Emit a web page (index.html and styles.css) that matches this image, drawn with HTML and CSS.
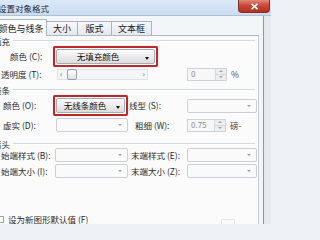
FILE: index.html
```html
<!DOCTYPE html>
<html lang="zh">
<head>
<meta charset="utf-8">
<title>设置对象格式</title>
<link rel="stylesheet" href="styles.css">
</head>
<body>
<div class="win">
  <div class="titlebar">
    <span class="title">设置对象格式</span>
    <div class="close">
      <svg width="9" height="7" viewBox="0 0 9 7"><path d="M1.5 0.8 L7.5 6.2 M7.5 0.8 L1.5 6.2" stroke="#fff" stroke-width="1.6" fill="none"/></svg>
    </div>
  </div>
  <div class="client">
    <div class="main">
      <div class="tabs">
        <div class="tab tab-active">颜色与线条</div>
        <div class="tab tab-size">大小</div>
        <div class="tab tab-layout">版式</div>
        <div class="tab tab-text">文本框</div>
      </div>
      <div class="panel">
        <div class="ghead"><span>填充</span><i></i></div>
        <div class="row row-big">
          <span class="lbl lbl-fill">颜色 (C):</span>
          <div class="hl hl-fill"><div class="combo-on"><span class="ctext">无填充颜色</span><span class="carrow"></span></div></div>
        </div>
        <div class="row row-trans">
          <span class="lbl lbl-trans">透明度 (T):</span>
          <div class="slider"><span class="sarr">‹</span><span class="thumb"></span><span class="sfill"></span><span class="sarr">›</span></div>
          <div class="spin spin-trans"><span class="sval">0</span><span class="sbtn"><i class="up"></i><i class="dn"></i></span></div>
          <span class="unit">%</span>
        </div>
        <div class="ghead ghead-line"><span>线条</span><i></i></div>
        <div class="row row-big">
          <span class="lbl lbl-line">颜色 (O):</span>
          <div class="hl hl-line"><div class="combo-on"><span class="ctext">无线条颜色</span><span class="carrow"></span></div></div>
          <span class="rlbl rlbl-type">线型 (S):</span>
          <div class="combo combo-r"><span class="darrow"></span></div>
        </div>
        <div class="row row-dash">
          <span class="lbl lbl-dash">虚实 (D):</span>
          <div class="combo combo-dash"><span class="darrow"></span></div>
          <span class="rlbl rlbl-weight">粗细 (W):</span>
          <div class="spin spin-weight"><span class="sval">0.75</span><span class="sbtn"><i class="up"></i><i class="dn"></i></span></div>
          <span class="unit">磅-</span>
        </div>
        <div class="ghead ghead-arrow"><span>箭头</span><i></i></div>
        <div class="row row-begin">
          <span class="lbl lbl-arrow">始端样式 (B):</span>
          <div class="combo combo-arrow"><span class="darrow"></span></div>
          <span class="rlbl rlbl-end">末端样式 (E):</span>
          <div class="combo combo-r"><span class="darrow"></span></div>
        </div>
        <div class="row row-size">
          <span class="lbl lbl-arrow">始端大小 (I):</span>
          <div class="combo combo-arrow"><span class="darrow"></span></div>
          <span class="rlbl rlbl-end">末端大小 (Z):</span>
          <div class="combo combo-r"><span class="darrow"></span></div>
        </div>
        <div class="row row-check">
          <span class="check"></span>
          <span class="check-text">设为新图形默认值 (F)</span>
          <span class="btn-ghost"></span>
        </div>
      </div>
    </div>
    <div class="edge"></div>
  </div>
</div>
</body>
</html>
```

FILE: styles.css
```css
* { box-sizing: border-box; margin: 0; padding: 0; }
html, body { width: 271px; height: 224px; overflow: hidden; }
body {
  font-family: "Noto Sans CJK SC", "Noto Sans", sans-serif;
  font-size: 8.5px;
  line-height: 1;
  color: #2b2b2b;
  background: #eef1f5;
}
.win { display: flex; flex-direction: column; height: 224px; }

.titlebar {
  height: 18px;
  display: flex;
  align-items: flex-start;
  background: linear-gradient(#dbe8f6, #cbddf1);
  border-bottom: 1px solid #b3c1cf;
}
.title { margin-left: -2px; margin-top: 4px; font-size: 8.5px; color: #1d2a38; }
.close {
  margin-left: auto;
  margin-right: 1px;
  width: 32px;
  height: 13px;
  background: linear-gradient(#e08b78, #c9493a 45%, #b1301f);
  border: 1px solid #8c2b1e;
  border-top: none;
  border-radius: 0 0 4px 4px;
  display: flex;
  align-items: center;
  justify-content: center;
}

.client { flex: 1; display: flex; background: #f3f6f9; }
.main { width: 259px; display: flex; flex-direction: column; }

.tabs { height: 19px; display: flex; align-items: flex-end; }
.tab {
  height: 14px;
  display: flex;
  align-items: center;
  justify-content: center;
  font-size: 9px;
  color: #222;
  border: 1px solid #a9b4c0;
  border-bottom: none;
  background: linear-gradient(#f7f8fa, #e4e8ed);
  margin-left: -1px;
}
.tab-active {
  height: 17px;
  width: 50px;
  margin-left: -3px;
  margin-bottom: -1px;
  background: #fbfbfc;
  position: relative;
  z-index: 1;
  padding-right: 2px;
}
.tab-size { width: 32px; }
.tab-layout { width: 35px; }
.tab-text { width: 41px; }

.panel {
  flex: 1;
  display: flex;
  flex-direction: column;
  background: #fbfbfc;
  border-top: 1px solid #aeb8c3;
  border-right: 1px solid #c6ced6;
}

.ghead { height: 10px; display: flex; align-items: center; margin-left: -7px; margin-right: 3px; }
.ghead span { margin-right: 3px; }
.ghead i { flex: 1; height: 2px; border-top: 1px solid #d2d9e0; border-bottom: 1px solid #ffffff; }
.ghead-line { margin-top: 4px; }
.ghead-arrow { margin-top: 7px; }

.row { display: flex; align-items: center; }
.row-big { height: 21px; }
.row-trans { height: 14px; }
.row-dash { height: 14px; margin-top: 2px; }
.row-begin { height: 14px; margin-top: -1px; }
.row-size { height: 14px; margin-top: 2px; }
.row-check { height: 10px; margin-top: 36px; margin-left: -3px; }

.lbl { flex: none; white-space: nowrap; }
.lbl-fill { width: 53px; padding-left: 10px; }
.lbl-trans { width: 57px; padding-left: 1px; }
.lbl-line { width: 53px; padding-left: 3px; }
.lbl-dash { width: 56px; padding-left: 3px; }
.lbl-arrow { width: 55px; padding-left: 1px; }

.rlbl { flex: none; width: 59px; white-space: nowrap; }
.rlbl-type { padding-left: 1px; }
.rlbl-weight { padding-left: 7px; }
.rlbl-end { padding-left: 3px; }

.hl {
  flex: none;
  height: 21px;
  border: 2px solid #b82a2e;
  border-radius: 2px;
  padding: 1px;
  background: #fff;
  box-shadow: 0 0 1px #d88;
}
.hl-fill { width: 105px; }
.hl-line { width: 75px; }
.combo-on {
  height: 100%;
  display: flex;
  align-items: center;
  border: 1px solid #a9adb2;
  border-radius: 2px;
  background: linear-gradient(#fbfbfb, #ececec 50%, #dcdcdc);
}
.ctext { flex: 1; text-align: center; color: #111; }
.carrow {
  width: 15px;
  height: 0;
  display: flex;
  justify-content: center;
}
.carrow::before {
  content: "";
  border-left: 2.5px solid transparent;
  border-right: 2.5px solid transparent;
  border-top: 3px solid #111;
}
.hl-line .ctext { padding-left: 2px; }
.hl-line .carrow { width: 13px; }

.combo {
  flex: none;
  height: 14px;
  border: 1px solid #ccd0d4;
  border-radius: 2px;
  background: #fafafa;
  display: flex;
  align-items: center;
  justify-content: flex-end;
  padding-right: 5px;
}
.darrow {
  border-left: 2px solid transparent;
  border-right: 2px solid transparent;
  border-top: 2.5px solid #9a9ea3;
}
.combo-r { width: 70px; }
.combo-dash { width: 72px; }
.combo-arrow { width: 73px; }

.slider {
  flex: none;
  width: 91px;
  height: 11px;
  display: flex;
  align-items: center;
  border: 1px solid #e0e3e6;
  background: #f4f5f6;
  color: #666;
  font-size: 8px;
  padding: 0 2px;
}
.sarr { line-height: 1; }
.thumb {
  width: 10px;
  height: 11px;
  margin-left: 5px;
  border: 1px solid #9aa1a8;
  border-radius: 2px;
  background: linear-gradient(#ffffff, #dfe2e5);
}
.sfill { flex: 1; }

.spin {
  flex: none;
  height: 13px;
  display: flex;
  border: 1px solid #cfd3d7;
  background: #f7f7f7;
  color: #8b8b8b;
}
.spin-trans { width: 40px; margin-left: 39px; }
.spin-weight { width: 39px; }
.sval { flex: 1; display: flex; align-items: center; padding-left: 3px; font-size: 8px; }
.sbtn {
  width: 11px;
  display: flex;
  flex-direction: column;
  border-left: 1px solid #d6d9dc;
  background: #eceef0;
}
.sbtn i { flex: 1; display: flex; align-items: center; justify-content: center; }
.sbtn i + i { border-top: 1px solid #d6d9dc; }
.up::before {
  content: "";
  border-left: 2px solid transparent;
  border-right: 2px solid transparent;
  border-bottom: 2px solid #a0a4a8;
}
.dn::before {
  content: "";
  border-left: 2px solid transparent;
  border-right: 2px solid transparent;
  border-top: 2px solid #a0a4a8;
}
.unit { margin-left: 4px; color: #444; }

.check {
  flex: none;
  width: 7px;
  height: 7px;
  border: 1px solid #9da3a9;
  background: #fff;
}
.check-text { margin-left: 4px; }
.btn-ghost {
  margin-left: 133px;
  width: 14px;
  height: 6px;
  margin-top: 6px;
  border: 1px solid #e2e4e6;
  border-bottom: none;
  border-radius: 2px 2px 0 0;
}

.edge {
  width: 8px;
  margin-left: 4px;
  border-left: 1px solid #8f99a4;
  background: #e6e9ed;
}
```
